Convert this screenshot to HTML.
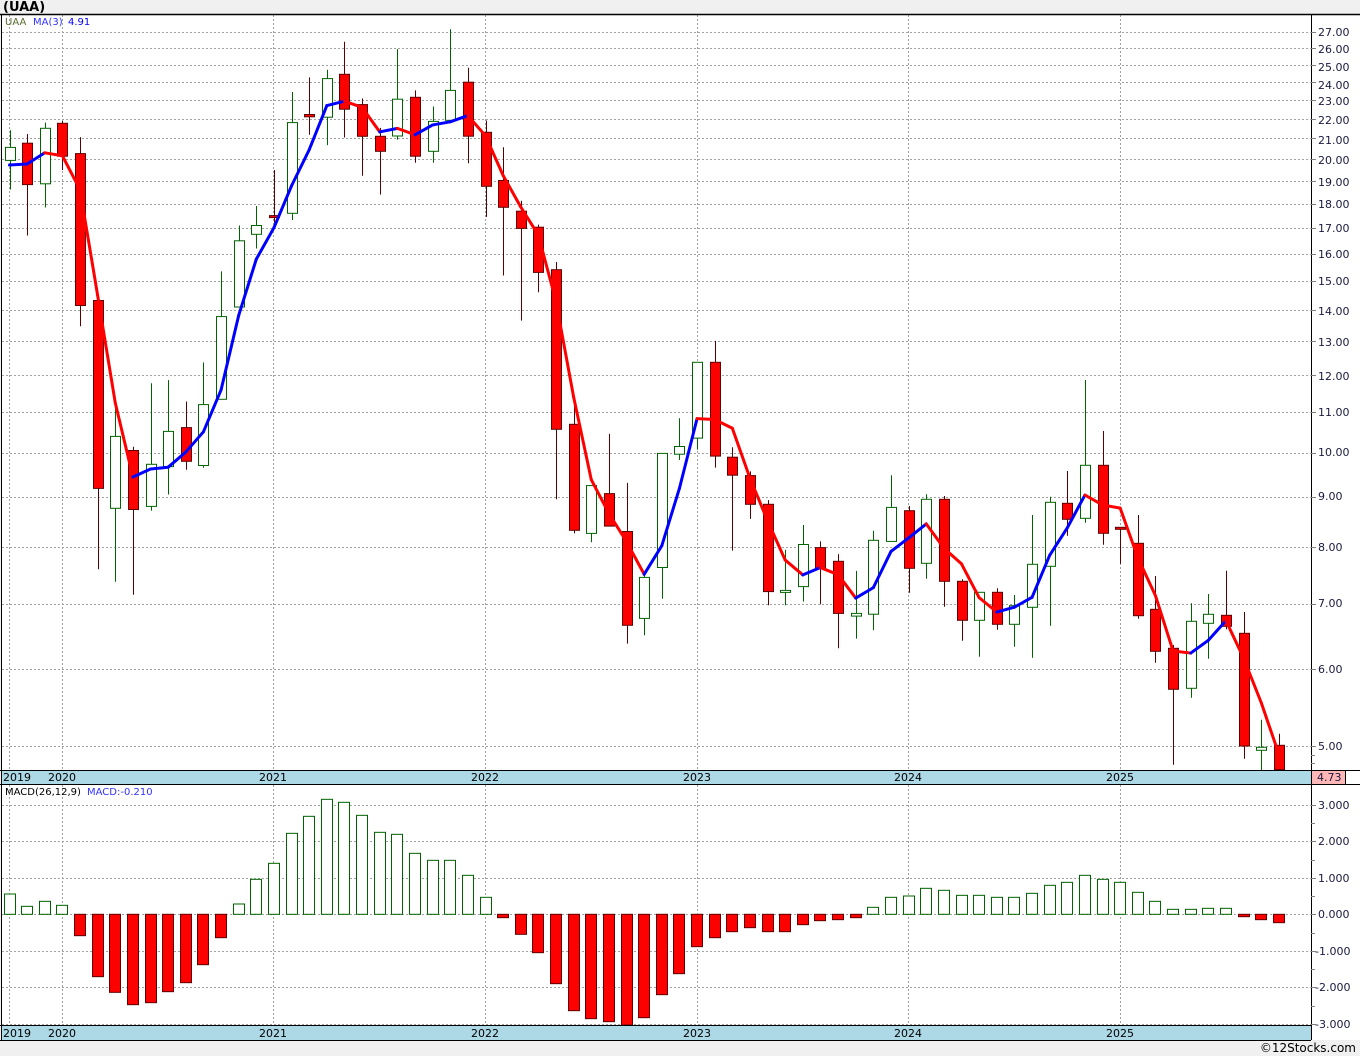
<!DOCTYPE html>
<html><head><meta charset="utf-8">
<style>
html,body{margin:0;padding:0;background:#f0f0f0;}
svg{display:block;}
text{font-family:"DejaVu Sans","Liberation Sans",sans-serif;}
</style></head>
<body>
<svg id="s" width="1360" height="1056" viewBox="0 0 1360 1056" xmlns="http://www.w3.org/2000/svg">
<rect x="0" y="0" width="1360" height="1056" fill="#f0f0f0"/>
<rect x="1" y="14" width="1359" height="1026" fill="#ffffff"/>
<g id="grid"></g>
<g id="cand"></g>
<g id="ma"></g>
<g id="macd"></g>
<rect x="1" y="770" width="1310" height="14" fill="#add8e6"/>
<rect x="1" y="1025" width="1310" height="15" fill="#add8e6"/>
<line x1="0" y1="770.5" x2="1360" y2="770.5" stroke="#000"/>
<line x1="0" y1="784.5" x2="1360" y2="784.5" stroke="#000"/>
<line x1="0" y1="1025.5" x2="1311" y2="1025.5" stroke="#000"/>
<line x1="0" y1="1040.5" x2="1311" y2="1040.5" stroke="#000"/>
<line x1="0" y1="14.5" x2="1360" y2="14.5" stroke="#000" stroke-width="1.5"/>
<line x1="1.5" y1="14" x2="1.5" y2="1040" stroke="#000"/>
<line x1="1311.5" y1="14" x2="1311.5" y2="1040" stroke="#000"/>
<rect x="1311.5" y="770.5" width="34" height="14" fill="#ffb6b6" stroke="#000"/>
<text x="1317" y="781" font-size="11" fill="#1a1a40">4.73</text>
<g id="ticks"></g>
<g font-size="11" fill="#1a1a40">
<text x="1318" y="36">27.00</text><text x="1318" y="53">26.00</text><text x="1318" y="71">25.00</text>
<text x="1318" y="89">24.00</text><text x="1318" y="105">23.00</text><text x="1318" y="124">22.00</text>
<text x="1318" y="144">21.00</text><text x="1318" y="164">20.00</text><text x="1318" y="186">19.00</text>
<text x="1318" y="208">18.00</text><text x="1318" y="232">17.00</text><text x="1318" y="258">16.00</text>
<text x="1318" y="285">15.00</text><text x="1318" y="315">14.00</text><text x="1318" y="346">13.00</text>
<text x="1318" y="380">12.00</text><text x="1318" y="416">11.00</text><text x="1318" y="456">10.00</text>
<text x="1318" y="500">9.00</text><text x="1318" y="551">8.00</text><text x="1318" y="607">7.00</text>
<text x="1318" y="673">6.00</text><text x="1318" y="750">5.00</text>
<text x="1318" y="809">3.000</text><text x="1318" y="845">2.000</text><text x="1318" y="882">1.000</text>
<text x="1318" y="918">0.000</text><text x="1315" y="955">-1.000</text><text x="1315" y="991">-2.000</text>
<text x="1315" y="1028">-3.000</text>
</g>
<g font-size="11" fill="#000">
<text x="3" y="781">2019</text><text x="48" y="781">2020</text><text x="259" y="781">2021</text>
<text x="471" y="781">2022</text><text x="683" y="781">2023</text><text x="894" y="781">2024</text>
<text x="1106" y="781">2025</text>
<text x="3" y="1037">2019</text><text x="48" y="1037">2020</text><text x="259" y="1037">2021</text>
<text x="471" y="1037">2022</text><text x="683" y="1037">2023</text><text x="894" y="1037">2024</text>
<text x="1106" y="1037">2025</text>
</g>
<text x="3" y="11" font-size="13" font-weight="bold" fill="#000">(UAA)</text>
<text x="5" y="25" font-size="10" fill="#556b2f">UAA</text>
<text x="33" y="25" font-size="10" fill="#3333ff">MA(3)</text>
<text x="68" y="25" font-size="10" fill="#0000ff">4.91</text>
<text x="5" y="795" font-size="10" fill="#000">MACD(26,12,9)</text>
<text x="87" y="795" font-size="10" fill="#3333ff">MACD:-0.210</text>
<text x="1356" y="1052" font-size="12" fill="#000" text-anchor="end">©12Stocks.com</text>
</svg>
<script>
(function(){
var NS="http://www.w3.org/2000/svg";
function el(p,t,a){var e=document.createElementNS(NS,t);for(var k in a)e.setAttribute(k,a[k]);p.appendChild(e);return e;}
var g=document.getElementById('grid'),tk=document.getElementById('ticks');
function py(p){return 746-423.4*(Math.log(p)-1.6094);}
for(var p=5;p<=27;p++){var y=Math.round(py(p))+0.5;
 el(g,'line',{x1:2,y1:y,x2:1311,y2:y,stroke:'#a0a0a0','stroke-dasharray':'2,2'});
 el(tk,'line',{x1:1311,y1:y,x2:1316,y2:y,stroke:'#808080'});}
[4.9,4.8].forEach(function(p){var y=Math.round(py(p))+0.5;el(tk,'line',{x1:1311,y1:y,x2:1315,y2:y,stroke:'#808080'});});
for(var v=-3;v<=3;v++){var y=Math.round(914.3-36.5*v)+0.5;
 el(g,'line',{x1:2,y1:y,x2:1311,y2:y,stroke:'#a0a0a0','stroke-dasharray':'2,2'});
 el(tk,'line',{x1:1311,y1:y,x2:1316,y2:y,stroke:'#808080'});
 if(v<3){var y2=Math.round(914.3-36.5*(v+0.5))+0.5;el(tk,'line',{x1:1311,y1:y2,x2:1315,y2:y2,stroke:'#808080'});}}
[9.5,62.5,273.5,485.5,697.5,908.5,1120.5].forEach(function(x){
 el(g,'line',{x1:x,y1:15,x2:x,y2:770,stroke:'#a0a0a0','stroke-dasharray':'2,2'});
 el(g,'line',{x1:x,y1:785,x2:x,y2:1025,stroke:'#a0a0a0','stroke-dasharray':'2,2'});});
var D=[[147.4,160.4,130.2,189.5,1],[143.2,184.6,134,235.5,0],[128.3,183.8,122.6,207.5,1],[123.3,156.2,121,170,0],[153.6,305.5,137.1,326.2,0],[300.5,488.4,300,569.2,0],[436.4,508.3,406.5,581.8,1],[450.5,509.5,446.7,594.8,0],[464.3,506.4,383.2,510.6,1],[431.4,466.6,380.1,494.5,1],[427.6,461.3,401.5,469.7,0],[404.6,465.5,362.5,467.8,1],[316.6,399.3,271.4,399.3,1],[240.8,307,225.5,307,1],[225.5,234.3,206,248.5,1],[215.6,217.1,170,222.8,0],[122.6,213.3,92,220,1],[114.5,116.8,77.4,134.8,0],[78.6,117.2,69.8,145.1,1],[74.3,109.2,41.8,137.5,0],[104.6,136.3,98.5,175.8,0],[136.3,151.3,127.9,194.5,0],[99.2,136,49.1,139.8,1],[97.3,156.2,90.4,162.7,0],[121.4,151.3,106.5,162.7,1],[90.4,120.3,29.2,120.3,1],[82.2,136.2,67.7,163.3,0],[132.3,186.3,120.5,216.9,0],[180.5,207.3,147.3,275.5,0],[211.2,228.4,200.8,320.6,0],[227.2,272.4,224.6,292.3,0],[269.7,429.3,262,499.3,0],[424.3,530.3,396.8,533.4,0],[485.6,533.4,485.6,542.2,1],[493.6,526.1,433.9,526.1,0],[531.5,625.3,482.9,643.6,0],[577.4,618.4,574.8,635.2,1],[453.4,567.5,453.4,598.8,1],[446.5,454.2,418.2,460,1],[362.3,438.1,362.3,449.6,1],[362.3,456.1,340.9,467.6,0],[457.2,475.2,447.3,550.6,0],[475.6,504.3,471.4,518.9,0],[504.3,591.6,500.1,605.3,0],[590.4,591.6,549.8,605.3,1],[544.5,586.6,525,601.5,1],[547.6,569,541.4,604.2,0],[561.3,613.4,554.1,648.2,0],[613.4,616.1,570.9,638.6,1],[540.3,614.2,530.7,630.2,1],[507.4,541.4,475.2,541.4,1],[510.7,568.3,506,592.7,0],[499.3,563.3,494.3,578.7,1],[499.3,581.3,496,606.7,0],[581.3,620.3,579.3,640.7,0],[592.3,620.3,592.3,656.7,1],[592.3,624.3,588.3,629.7,0],[605.7,624.3,595,646.7,1],[564.3,607.3,515,657.7,1],[502.3,566.3,496.7,625.7,1],[503.3,519.3,471,535.7,0],[465.3,518.3,380,522.7,1],[465.3,533.3,431,544.7,0],[527.3,529.3,527.3,563.7,0],[543.3,615.7,515,618.7,0],[609.3,651.3,576,662.7,0],[648.3,689.3,645,764.7,0],[621.3,688.3,603.3,697.7,1],[614.3,623.3,594,658.7,1],[615.3,626.3,570.7,629.3,0],[633.3,746,612,758.7,0],[747.3,750.3,719.7,770,1],[745.3,769.7,733.7,769.7,0]];
var cg=document.getElementById('cand');
function cx(i){return 9.5+17.63*i;}
function yp(y){return Math.exp((746-y)/423.4+1.6094);}
var closes=[];
D.forEach(function(d,i){var x=Math.round(cx(i))+0.5;var up=d[4];
 el(cg,'line',{x1:x,y1:d[2],x2:x,y2:d[3],stroke:up?'#006400':'#5a0000','stroke-width':1});
 var h=Math.max(d[1]-d[0],2);
 el(cg,'rect',{x:x-5,y:d[0],width:10,height:h,fill:up?'#fff':'#ff0000',stroke:up?'#006400':'#600000','stroke-width':1});
 closes.push(yp(up?d[0]:d[1]));});
var mg=document.getElementById('ma');var ma=[];
for(var i=0;i<D.length;i++){
 if(i<2){ma.push(i==0?165:164);continue;}
 var a=(closes[i]+closes[i-1]+closes[i-2])/3;ma.push(py(a));}
for(var i=1;i<ma.length;i++){
 el(mg,'line',{x1:cx(i-1),y1:ma[i-1],x2:cx(i),y2:ma[i],stroke:ma[i]>ma[i-1]?'#ff0000':'#0000ff','stroke-width':3,'stroke-linecap':'round'});}
var M=[327,364,349,361,452,575,622,659,653,620,593,539,458,357,283,235,145,94,43,52,91,142,148,205,226,226,271,337,398,448,503,596,677,701,710,740,698,629,566,485,458,440,428,440,440,419,407,404,398,367,337,333,310,316,331,331,337,337,325,301,292,271,283,292,322,349,373,373,370,370,395,404,413];
var mc=document.getElementById('macd');var z=914.3;
M.forEach(function(v,i){var y=785+v/3;if(y>1025)y=1025;var x=Math.round(cx(i));
 var red=y>z+0.5;var t=Math.min(y,z),h=Math.abs(y-z);if(h<1.5)h=1.5;
 el(mc,'rect',{x:x-5.5,y:t,width:11,height:h,fill:red?'#ff0000':'#fff',stroke:red?'#600000':'#006400','stroke-width':1});});
})();
</script>
</body></html>
